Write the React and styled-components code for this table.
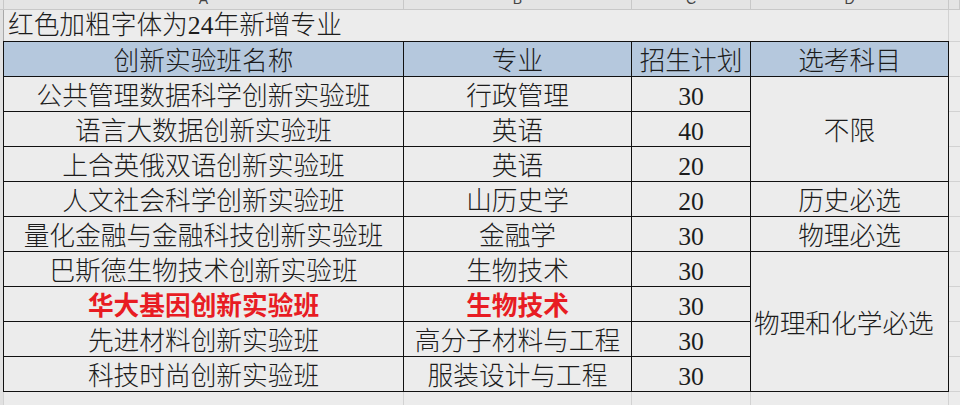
import React from "react";
import styled, { createGlobalStyle } from "styled-components";

const GlobalStyle = createGlobalStyle`
  html, body {
    margin: 0;
    padding: 0;
    background: #ececec;
    overflow: hidden;
  }
`;

const COLS = [400, 228, 119, 198];
const LETTERS = ["A", "B", "C", "D"];
const FONT = `"Liberation Serif", "Noto Sans CJK SC", serif`;

const rows = [
  { name: "公共管理数据科学创新实验班", major: "行政管理", plan: 30 },
  { name: "语言大数据创新实验班", major: "英语", plan: 40 },
  { name: "上合英俄双语创新实验班", major: "英语", plan: 20 },
  { name: "人文社会科学创新实验班", major: "山历史学", plan: 20 },
  { name: "量化金融与金融科技创新实验班", major: "金融学", plan: 30 },
  { name: "巴斯德生物技术创新实验班", major: "生物技术", plan: 30 },
  { name: "华大基因创新实验班", major: "生物技术", plan: 30, isNew: true },
  { name: "先进材料创新实验班", major: "高分子材料与工程", plan: 30 },
  { name: "科技时尚创新实验班", major: "服装设计与工程", plan: 30 },
];

// 选考科目 merged cells, keyed by the row they start on
const subjects = {
  0: { text: "不限", span: 3 },
  3: { text: "历史必选", span: 1 },
  4: { text: "物理必选", span: 1 },
  5: { text: "物理和化学必选", span: 4, left: true },
};

const Page = styled.div`
  width: 960px;
  height: 405px;
  overflow: hidden;
  font-family: ${FONT};
  color: #1c1c1c;
`;

const ColHeaderBar = styled.div`
  display: flex;
  height: 10px;
  background: #e4e4e4;
  border-bottom: 1px solid #c8c8c8;
  box-sizing: border-box;
`;

const ColHeaderCell = styled.div`
  flex: ${(p) => (p.$w ? `0 0 ${p.$w}px` : "1")};
  box-sizing: border-box;
  border-right: 1px solid #c8c8c8;
  display: flex;
  justify-content: center;
  align-items: flex-end;
  overflow: hidden;
  font-family: "Liberation Sans", sans-serif;
  font-size: 14px;
  line-height: 14px;
  color: #444;

  span {
    margin-bottom: 3px;
  }
`;

const Body = styled.div`
  display: flex;
`;

const RowStub = styled.div`
  flex: 0 0 3px;
  background: #e1e1e1;
`;

const Main = styled.div`
  display: flex;
  flex-direction: column;
  width: 946px;
`;

const TitleRow = styled.div`
  height: 31px;
  box-sizing: border-box;
  border-left: 1px solid #a8a8a8;
  border-right: 1px solid #d2d2d2;
  padding-left: 4px;
  display: flex;
  align-items: center;
  font-size: 25.7px;
  line-height: 1;
  font-weight: 300;
`;

const Grid = styled.div`
  display: grid;
  grid-template-columns: ${COLS.map((c) => `${c}px`).join(" ")};
  grid-auto-rows: 35px;
  border-left: 1px solid #111;
  border-top: 1px solid #111;
`;

const Cell = styled.div`
  box-sizing: border-box;
  border-right: 1px solid #111;
  border-bottom: 1px solid #111;
  display: flex;
  align-items: center;
  justify-content: ${(p) => (p.$left ? "flex-start" : "center")};
  padding: 6px 0 0 ${(p) => (p.$left ? "3px" : "0")};
  font-size: 25.7px;
  line-height: 1;
  white-space: nowrap;
  background: ${(p) => (p.$head ? "#b5c8dd" : "transparent")};
  color: ${(p) => (p.$red ? "#e81c23" : "#1c1c1c")};
  font-weight: ${(p) => (p.$red ? 700 : 300)};
  grid-row: ${(p) => (p.$span ? `span ${p.$span}` : "auto")};
  grid-column: ${(p) => (p.$col ? p.$col : "auto")};
`;

const EmptyRow = styled.div`
  display: flex;
  height: 35px;
  border-left: 1px solid #d2d2d2;
`;

const EmptyCell = styled.div`
  flex: 0 0 ${(p) => p.$w}px;
  box-sizing: border-box;
  border-right: 1px solid #d2d2d2;
  border-bottom: 1px solid #d2d2d2;
`;

const SideColumn = styled.div`
  flex: 1;
  display: flex;
  flex-direction: column;
`;

const SideCell = styled.div`
  height: ${(p) => p.$h}px;
  flex: 0 0 ${(p) => p.$h}px;
  box-sizing: border-box;
  border-bottom: 1px solid #d2d2d2;
`;

export default function App() {
  return (
    <Page>
      <GlobalStyle />
      <ColHeaderBar>
        <ColHeaderCell $w={4} />
        {COLS.map((w, i) => (
          <ColHeaderCell key={i} $w={w}>
            <span>{LETTERS[i]}</span>
          </ColHeaderCell>
        ))}
        <ColHeaderCell />
      </ColHeaderBar>

      <Body>
        <RowStub />
        <Main>
          <TitleRow>红色加粗字体为24年新增专业</TitleRow>
          <Grid>
            <Cell $head>创新实验班名称</Cell>
            <Cell $head>专业</Cell>
            <Cell $head>招生计划</Cell>
            <Cell $head>选考科目</Cell>
            {rows.map((r, i) => (
              <React.Fragment key={i}>
                <Cell $red={r.isNew} $col={1}>{r.name}</Cell>
                <Cell $red={r.isNew} $col={2}>{r.major}</Cell>
                <Cell $col={3}>{r.plan}</Cell>
                {subjects[i] && (
                  <Cell $col={4} $span={subjects[i].span} $left={subjects[i].left}>
                    {subjects[i].text}
                  </Cell>
                )}
              </React.Fragment>
            ))}
          </Grid>
          <EmptyRow>
            {COLS.map((w, i) => (
              <EmptyCell key={i} $w={w} />
            ))}
          </EmptyRow>
        </Main>
        <SideColumn>
          <SideCell $h={32} />
          {Array.from({ length: 11 }).map((_, i) => (
            <SideCell key={i} $h={35} />
          ))}
        </SideColumn>
      </Body>
    </Page>
  );
}
